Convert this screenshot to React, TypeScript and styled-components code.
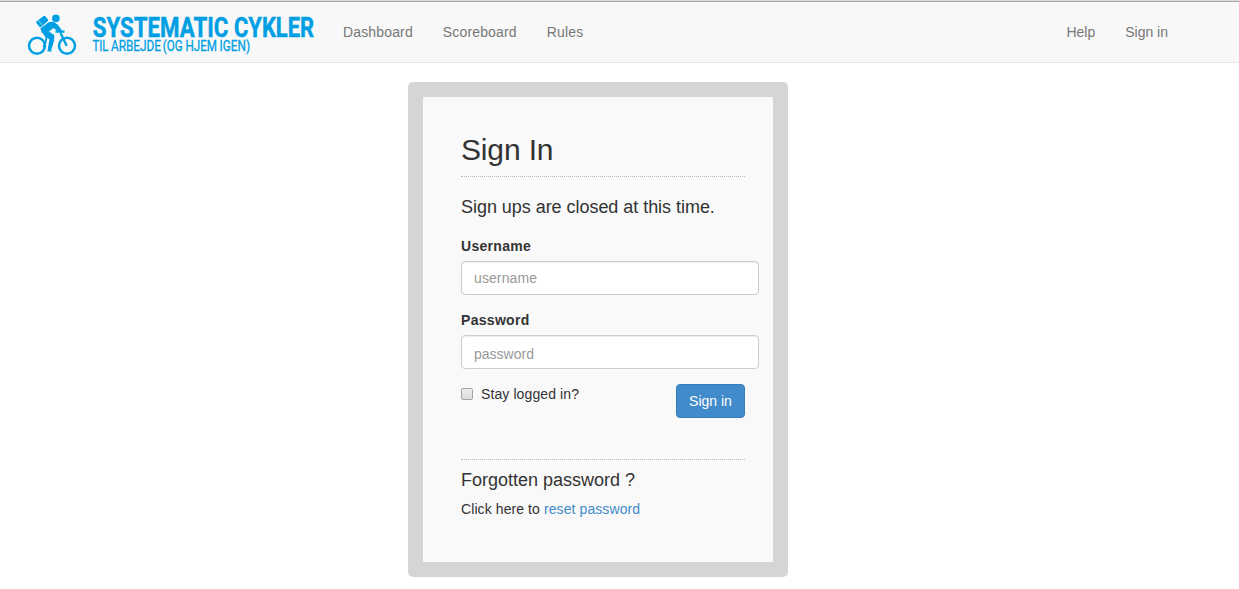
import React from "react";
import styled, { createGlobalStyle } from "styled-components";

const GlobalStyle = createGlobalStyle`
  *, *::before, *::after { box-sizing: border-box; }
  body {
    margin: 0;
    background: #fff;
    color: #333;
    font: 14px/20px "Liberation Sans", Arial, sans-serif;
  }
`;

const Navbar = styled.nav`
  display: flex;
  height: 63px;
  border-top: 1px solid #dcdcdc;
  border-bottom: 1px solid #e7e7e7;
  background: #f8f8f8;
  box-shadow: inset 0 1px 0 #a6a6a6;
  padding: 0 56px 0 27px;
`;

const Brand = styled.a`
  display: block;
  width: 301px;
  padding-top: 12px;
`;

const NavList = styled.div<{ $end?: boolean }>`
  display: flex;
  margin-left: ${(p) => (p.$end ? "auto" : "0")};
  letter-spacing: ${(p) => (p.$end ? "0" : "0.15px")};
`;

const NavLink = styled.a`
  padding: 21px 15px 0;
  color: #777;
  text-decoration: none;
`;

const Card = styled.main`
  width: 380px;
  height: 495px;
  margin: 19px 0 0 408px;
  border: 15px solid #d5d5d5;
  border-radius: 5px;
  background: #f9f9f9;
  padding: 35px 28px 0 38px;
`;

const Title = styled.h1`
  height: 45px;
  margin: 0 0 20px;
  border-bottom: 1px dotted #bbb;
  font-size: 30px;
  font-weight: 400;
  line-height: 36px;
  letter-spacing: -0.15px;
`;

const Subtitle = styled.h2<{ $tracking?: number }>`
  margin: 0;
  font-size: 18px;
  font-weight: 400;
  line-height: 20px;
  letter-spacing: ${(p) => p.$tracking ?? 0}px;
`;

const Field = styled.div`
  width: 298px;
  margin-bottom: 15px;
`;

const Label = styled.label`
  display: block;
  margin-bottom: 5px;
  font-weight: 700;
  letter-spacing: 0.3px;
`;

const Input = styled.input<{ $drop?: number }>`
  display: block;
  width: 100%;
  height: 34px;
  border: 1px solid #ccc;
  border-radius: 4px;
  background: #fff;
  box-shadow: inset 0 1px 1px rgba(0, 0, 0, 0.075);
  padding: ${(p) => 6 + (p.$drop ?? 0)}px 12px ${(p) => 6 - (p.$drop ?? 0)}px;
  font: inherit;
  letter-spacing: ${(p) => (p.$drop ? 0 : 0.1)}px;
  &::placeholder { color: #999; opacity: 1; }
`;

const Form = styled.form`
  padding-top: 19px;
`;

const Actions = styled.div`
  display: flex;
  align-items: flex-start;
  justify-content: space-between;
  height: 75px;
`;

const Remember = styled.label`
  display: flex;
  align-items: center;
  gap: 8px;
  letter-spacing: 0.1px;
`;

const Checkbox = styled.input`
  appearance: none;
  width: 12px;
  height: 12px;
  margin: 0;
  border: 1px solid #a3a3a3;
  border-radius: 2px;
  background: linear-gradient(#eee, #dcdcdc);
`;

const SubmitButton = styled.button`
  height: 34px;
  width: 69px;
  padding: 0;
  border: 1px solid #357ebd;
  border-radius: 4px;
  background: #428bca;
  color: #fff;
  font: inherit;
`;

const Reset = styled.section`
  border-top: 1px dotted #bbb;
  padding-top: 10px;
`;

const ResetText = styled.p`
  margin: 9px 0 0;
  letter-spacing: 0.09px;
`;

const Link = styled.a`
  color: #428bca;
  text-decoration: none;
`;

const LogoWord = styled.text<{ $size: number; $weight: number; $outline: number }>`
  font-family: Roboto, "Liberation Sans", sans-serif;
  font-size: ${(p) => p.$size}px;
  font-weight: ${(p) => p.$weight};
  stroke: #009fe3;
  stroke-width: ${(p) => p.$outline}px;
`;

const CONDENSE = 0.82;

type WordProps = { x: number; width: number; small?: boolean; children: string };

const Word = ({ x, width, small, children }: WordProps) => (
  <LogoWord
    $size={small ? 14 : 27}
    $weight={small ? 400 : 700}
    $outline={small ? 0.3 : 0.5}
    transform={`translate(${x} ${small ? 51 : 37.2}) scale(${CONDENSE} 1)`}
    textLength={width / CONDENSE}
    lengthAdjust="spacingAndGlyphs"
  >
    {children}
  </LogoWord>
);

const Logo = () => (
  <svg width="288" height="46" viewBox="27 13 288 46" fill="#009fe3" display="block">
    <g fill="none" stroke="#009fe3" strokeWidth="2.5">
      <circle cx="37" cy="45.8" r="8" />
      <circle cx="67" cy="45.8" r="8" />
      <path d="M66.8 46 60.5 33M55.5 31.6h9" strokeWidth="2.3" />
    </g>
    <circle cx="55.9" cy="18.4" r="3.8" />
    <path d="M37.2 22.4 44.2 16.8 47.2 20.2 40.4 26.2Z" stroke="#009fe3" strokeWidth="2.2" strokeLinejoin="round" />
    <path d="M38.6 20.4 42 24.9" stroke="#f8f8f8" strokeWidth=".6" />
    <path d="M40.4 28.6 49 22.1 53.5 21.8 57.6 24.5 61.9 30.2 60.6 31.8 58 31.8 53.6 28.1 49 31.4 54.4 35.2 54 41 51.2 50 52 51.4H47.4L49.4 39.6 41.8 32.6Z" />
    <path d="M42.5 30.5 46.6 37.4 45.4 43 43.4 47.4" stroke="#009fe3" strokeWidth="1.9" fill="none" />
    <Word x={92.8} width={135.5}>SYSTEMATIC</Word>
    <Word x={234} width={80}>CYKLER</Word>
    <Word small x={92.5} width={16}>TIL</Word>
    <Word small x={111} width={50}>ARBEJDE</Word>
    <Word small x={162.8} width={19.8}>(OG</Word>
    <Word small x={185.5} width={31.5}>HJEM</Word>
    <Word small x={219.5} width={30.5}>IGEN)</Word>
  </svg>
);

export default function App() {
  return (
    <>
      <GlobalStyle />
      <Navbar>
        <Brand><Logo /></Brand>
        <NavList>
          <NavLink>Dashboard</NavLink>
          <NavLink>Scoreboard</NavLink>
          <NavLink>Rules</NavLink>
        </NavList>
        <NavList $end>
          <NavLink>Help</NavLink>
          <NavLink>Sign in</NavLink>
        </NavList>
      </Navbar>
      <Card>
        <Title>Sign In</Title>
        <Subtitle $tracking={-0.04}>Sign ups are closed at this time.</Subtitle>
        <Form>
          <Field>
            <Label htmlFor="username">Username</Label>
            <Input id="username" placeholder="username" />
          </Field>
          <Field>
            <Label htmlFor="password">Password</Label>
            <Input id="password" type="password" placeholder="password" $drop={2} />
          </Field>
          <Actions>
            <Remember><Checkbox type="checkbox" />Stay logged in?</Remember>
            <SubmitButton type="button">Sign in</SubmitButton>
          </Actions>
        </Form>
        <Reset>
          <Subtitle>Forgotten password ?</Subtitle>
          <ResetText>Click here to <Link>reset password</Link></ResetText>
        </Reset>
      </Card>
    </>
  );
}
